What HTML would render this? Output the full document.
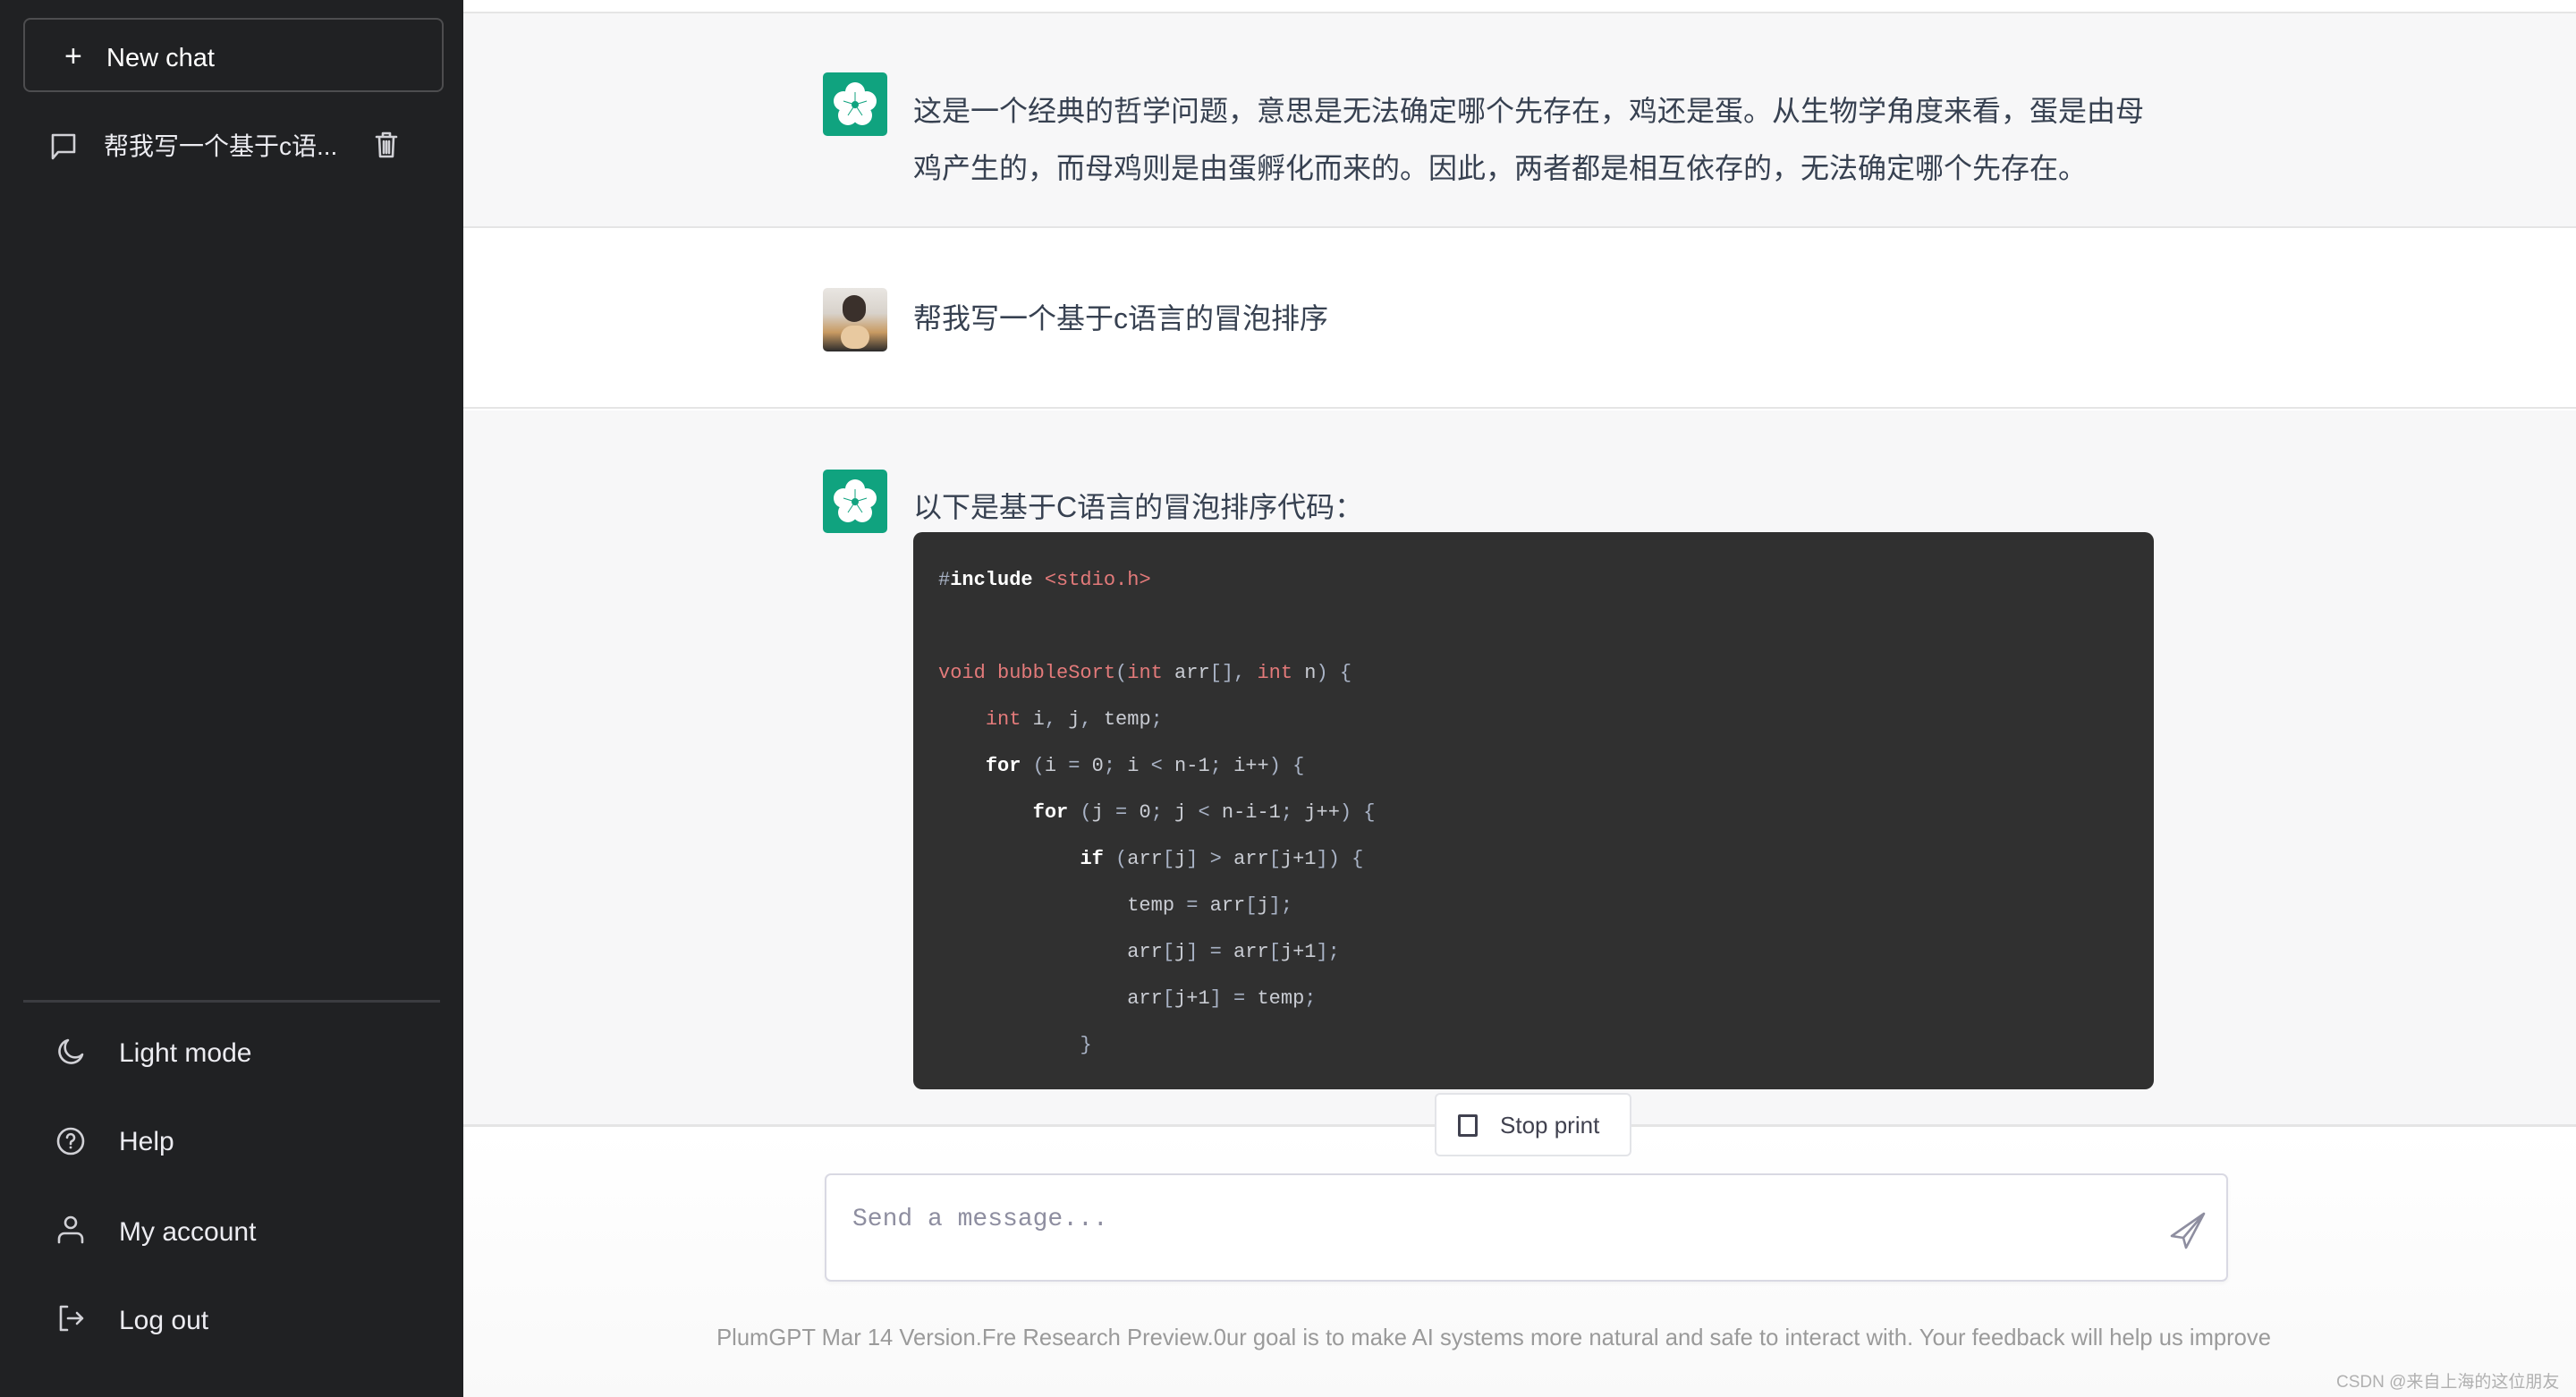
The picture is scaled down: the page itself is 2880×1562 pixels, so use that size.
<!DOCTYPE html>
<html><head><meta charset="utf-8">
<style>
*{margin:0;padding:0;box-sizing:border-box}
body{width:2880px;height:1562px;overflow:hidden;background:#fff;font-family:"Liberation Sans","Noto Sans CJK SC",sans-serif;position:relative}
.abs{position:absolute}
#side{left:0;top:0;width:518px;height:1562px;background:#202123}
.nc{left:26px;top:20px;width:470px;height:83px;border:2px solid #4d4d4f;border-radius:8px;color:#fff;font-size:29px}
.st{color:#ececf1;font-size:30px;line-height:40px}
.ico{stroke:#d1d1d6;fill:none;stroke-width:2.6;stroke-linecap:round;stroke-linejoin:round}
.msg{color:#374151;font-size:32px;line-height:64px;font-family:"Liberation Sans","Noto Sans CJK SC",sans-serif}
.av{width:72px;height:71px;border-radius:5px;background:#10a37f;overflow:hidden}
pre{font-family:"Liberation Mono","Noto Sans CJK SC",monospace;font-size:22px;color:#c9ccd3}
.k{color:#e37a7a}.b{color:#fff;font-weight:bold}.p{color:#a9b3c6}
</style></head><body>
<div id="side" class="abs">
  <div class="abs nc">
    <span class="abs" style="left:44px;top:22px;font-size:34px">+</span>
    <span class="abs" style="left:91px;top:27px">New chat</span>
  </div>
  <svg class="abs" style="left:56px;top:148px" width="30" height="32" viewBox="0 0 30 32"><path class="ico" d="M3 3h24v19H9l-6 7z"/></svg>
  <span class="abs st" style="left:116px;top:144px;font-size:28px">帮我写一个基于c语...</span>
  <svg class="abs" style="left:418px;top:146px" width="28" height="32" viewBox="0 0 28 32"><path class="ico" d="M3 7h22M10 7V3h8v4M6 7l1 22h14l1-22M11 12v13M14 12v13M17 12v13"/></svg>
  <div class="abs" style="left:26px;top:1118px;width:466px;height:3px;background:#3b3c40"></div>
  <svg class="abs" style="left:63px;top:1160px" width="32" height="32" viewBox="0 0 32 32"><path class="ico" d="M13 3A13 13 0 1 0 29 19 10 10 0 0 1 13 3z"/></svg>
  <span class="abs st" style="left:133px;top:1158px">Light mode</span>
  <svg class="abs" style="left:63px;top:1259px" width="32" height="34" viewBox="0 0 32 34"><circle class="ico" cx="16" cy="17" r="14"/><path class="ico" d="M12 13a4 4 0 1 1 5 4c-1 .5-1 1.5-1 3"/><circle cx="16" cy="24" r="1.4" fill="#d1d1d6"/></svg>
  <span class="abs st" style="left:133px;top:1257px">Help</span>
  <svg class="abs" style="left:63px;top:1358px" width="32" height="34" viewBox="0 0 32 34"><circle class="ico" cx="16" cy="9" r="6"/><path class="ico" d="M3 31v-4a6 6 0 0 1 6-6h14a6 6 0 0 1 6 6v4"/></svg>
  <span class="abs st" style="left:133px;top:1358px">My account</span>
  <svg class="abs" style="left:65px;top:1458px" width="30" height="32" viewBox="0 0 30 32"><path class="ico" d="M10 3H3v26h7M11 16h16M21 10l6 6-6 6"/></svg>
  <span class="abs st" style="left:133px;top:1457px">Log out</span>
</div>

<div class="abs" style="left:518px;top:0;width:2362px;height:15px;background:#fff;border-bottom:2px solid #e5e5e5"></div>
<div class="abs" style="left:518px;top:15px;width:2362px;height:240px;background:#f7f7f8;border-bottom:2px solid #e5e5e5"></div>
<div class="abs" style="left:518px;top:257px;width:2362px;height:200px;background:#fff;border-bottom:2px solid #e5e5e5"></div>
<div class="abs" style="left:518px;top:459px;width:2362px;height:801px;background:#f7f7f8;border-bottom:3px solid #e5e5e5"></div>
<div class="abs" style="left:518px;top:1263px;width:2362px;height:299px;background:linear-gradient(#fff,#f9f9f9)"></div>

<svg width="0" height="0" style="position:absolute"><defs><g id="fl"><rect width="72" height="71" rx="5" fill="#10a37f"/><g fill="#fff"><circle cx="36" cy="22" r="11"/><circle cx="49" cy="32" r="11"/><circle cx="44" cy="48" r="11"/><circle cx="28" cy="48" r="11"/><circle cx="23" cy="32" r="11"/></g><circle cx="36" cy="36" r="4" fill="#10a37f"/><path d="M36 36L36 22M36 36L49 32M36 36L44 48M36 36L28 48M36 36L23 32" stroke="#10a37f" stroke-width="1" fill="none"/></g></defs></svg>

<svg class="abs" style="left:920px;top:81px" width="72" height="71"><use href="#fl"/></svg>
<div class="abs msg" style="left:1021px;top:92px;width:1420px">这是一个经典的哲学问题，意思是无法确定哪个先存在，鸡还是蛋。从生物学角度来看，蛋是由母<br>鸡产生的，而母鸡则是由蛋孵化而来的。因此，两者都是相互依存的，无法确定哪个先存在。</div>

<div class="abs av" style="left:920px;top:322px;background:linear-gradient(180deg,#e9e6e2 0%,#d8d2cb 40%,#c89a62 70%,#2a2a2a 100%)">
  <div class="abs" style="left:22px;top:8px;width:26px;height:30px;border-radius:13px;background:#3a302b"></div>
  <div class="abs" style="left:20px;top:42px;width:32px;height:26px;border-radius:14px;background:#e8c9a0"></div>
</div>
<div class="abs msg" style="left:1021px;top:324px">帮我写一个基于c语言的冒泡排序</div>

<svg class="abs" style="left:920px;top:525px" width="72" height="71"><use href="#fl"/></svg>
<div class="abs msg" style="left:1021px;top:535px">以下是基于C语言的冒泡排序代码：</div>

<div class="abs" style="left:1021px;top:595px;width:1387px;height:623px;background:#303030;border-radius:10px"></div>
<pre class="abs" style="left:1049px;top:623px;line-height:52px"><span class="p">#</span><span class="b">include</span> <span class="k">&lt;stdio.h&gt;</span>

<span class="k">void bubbleSort</span><span class="p">(</span><span class="k">int</span> arr<span class="p">[],</span> <span class="k">int</span> n<span class="p">) {</span>
    <span class="k">int</span> i<span class="p">,</span> j<span class="p">,</span> temp<span class="p">;</span>
    <span class="b">for</span> <span class="p">(</span>i <span class="p">=</span> 0<span class="p">;</span> i <span class="p">&lt;</span> n-1<span class="p">;</span> i++<span class="p">) {</span>
        <span class="b">for</span> <span class="p">(</span>j <span class="p">=</span> 0<span class="p">;</span> j <span class="p">&lt;</span> n-i-1<span class="p">;</span> j++<span class="p">) {</span>
            <span class="b">if</span> <span class="p">(</span>arr<span class="p">[</span>j<span class="p">] &gt;</span> arr<span class="p">[</span>j+1<span class="p">]) {</span>
                temp <span class="p">=</span> arr<span class="p">[</span>j<span class="p">];</span>
                arr<span class="p">[</span>j<span class="p">] =</span> arr<span class="p">[</span>j+1<span class="p">];</span>
                arr<span class="p">[</span>j+1<span class="p">] =</span> temp<span class="p">;</span>
            <span class="p">}</span></pre>

<div class="abs" style="left:1604px;top:1222px;width:220px;height:71px;background:#fff;border:2px solid #e3e4e8;border-radius:6px">
  <div class="abs" style="left:24px;top:22px;width:22px;height:25px;border:3px solid #40414f;border-radius:2px"></div>
  <span class="abs" style="left:71px;top:19px;font-size:26px;color:#40414f">Stop print</span>
</div>

<div class="abs" style="left:922px;top:1312px;width:1569px;height:121px;background:#fff;border:2px solid #d9d9e3;border-radius:7px;box-shadow:0 2px 4px rgba(0,0,0,.04)">
  <span class="abs" style="left:29px;top:34px;font-family:'Liberation Mono',monospace;font-size:28px;color:#8e8ea0">Send a message...</span>
  <svg class="abs" style="left:1500px;top:40px" width="44" height="44" viewBox="0 0 44 44"><path d="M40 3L4 28l13 2 3 11zM40 3L17 30" stroke="#8e8ea0" stroke-width="2.6" fill="none" stroke-linejoin="round"/></svg>
</div>

<div class="abs" style="left:470px;top:1482px;width:2400px;text-align:center;font-size:25.6px;color:#9a9a9a">PlumGPT Mar 14 Version.Fre Research Preview.0ur goal is to make AI systems more natural and safe to interact with. Your feedback will help us improve</div>
<div class="abs" style="left:2612px;top:1530px;font-size:19px;color:#b0b0b0">CSDN @来自上海的这位朋友</div>
</body></html>
